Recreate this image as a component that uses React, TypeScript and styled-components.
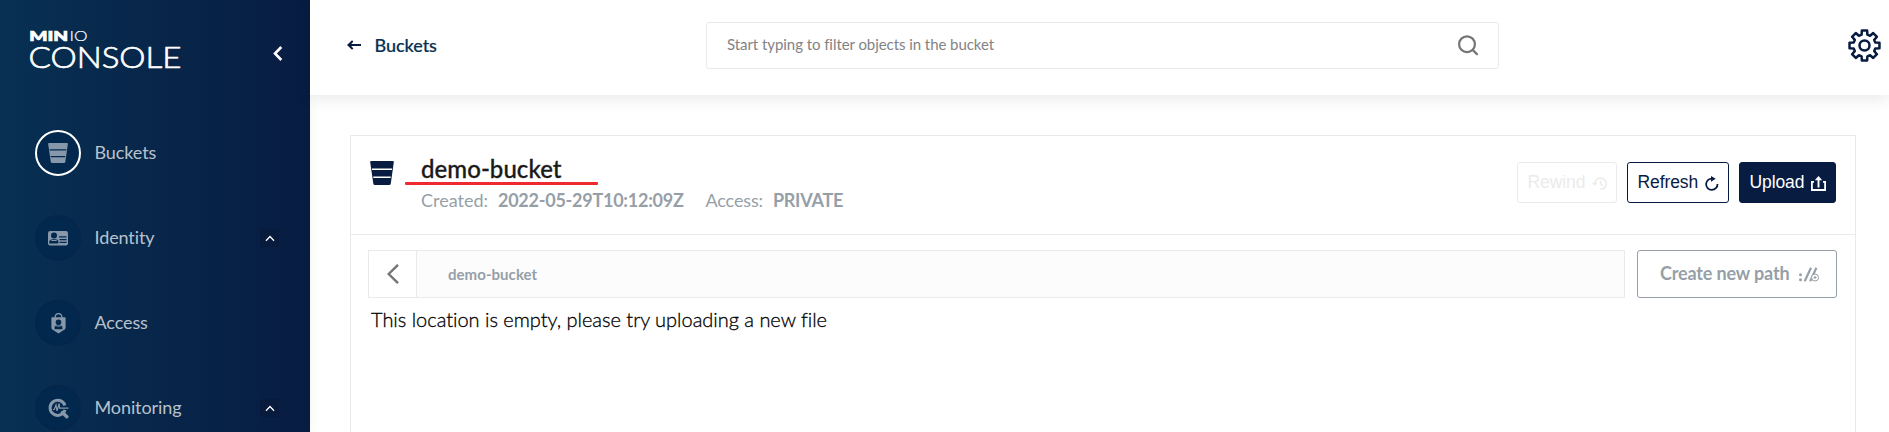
import React from "react";
import styled, { createGlobalStyle } from "styled-components";

const navy = "#081c42";
const line = "#e9ebeb";
const muted = "#969fa8";

const GlobalStyle = createGlobalStyle`
  * { box-sizing: border-box; }
  body {
    margin: 0;
    background: #fff;
    font-family: Lato, "Liberation Sans", sans-serif;
    font-variant-ligatures: none;
    overflow: hidden;
  }
  button { font: inherit; letter-spacing: inherit; margin: 0; padding: 0; background: none; border: 0; }
  svg { display: block; flex: none; }
`;

const Shell = styled.div`
  display: flex;
  height: 432px;
  overflow: hidden;
`;

const Sidebar = styled.nav`
  flex: none;
  width: 310px;
  background: linear-gradient(90deg, #073052 0%, #081c42 100%);
  box-shadow: 0 0 10px rgba(0, 0, 0, 0.06);
  z-index: 1;
`;

const Brand = styled.div`
  display: flex;
  justify-content: space-between;
  height: 130px;
  padding: 24px 27px 0 28px;
`;

const CollapseButton = styled.button`
  height: 15px;
  margin-top: 22px;
  color: #fff;
`;

const MenuItem = styled.div`
  display: flex;
  align-items: center;
  height: 46px;
  margin-bottom: 39px;
  padding: 0 31px 0 35px;
`;

const MenuIcon = styled.span<{ $active?: boolean }>`
  display: flex;
  align-items: center;
  justify-content: center;
  width: 46px;
  height: 46px;
  border: 2px solid ${(p) => (p.$active ? "#fff" : "#05264a")};
  border-radius: 50%;
  background: #02294d;
  color: #8798ab;
`;

const MenuLabel = styled.span`
  flex: 1;
  margin-left: 13.5px;
  padding-bottom: 2px;
  color: #b9c2cc;
  font-size: 18px;
  line-height: 22px;
  letter-spacing: -0.1px;
`;

const Toggle = styled.span`
  display: flex;
  align-items: center;
  justify-content: center;
  width: 19px;
  height: 18px;
  border-radius: 2px;
  background: #081b3c;
  color: #fff;
`;

const Main = styled.main`
  flex: 1;
  min-width: 0;
  display: flex;
  flex-direction: column;
`;

const Header = styled.header`
  display: flex;
  align-items: center;
  flex: none;
  height: 95px;
  padding: 0 8px 5px 37px;
  background: #fff;
  box-shadow: 0 3px 16px rgba(0, 0, 0, 0.1);
  z-index: 2;
`;

const BackLink = styled.div`
  display: flex;
  align-items: center;
  gap: 14px;
  width: 359px;
  color: #073052;
  font-size: 18px;
  font-weight: 500;
  line-height: 22px;
  -webkit-text-stroke: 0.2px;

  span { margin-left: -0.5px; letter-spacing: -0.05px; }
`;

const SearchBox = styled.div`
  display: flex;
  align-items: center;
  justify-content: space-between;
  width: 793px;
  height: 47px;
  padding: 0 20px;
  border: 1px solid ${line};
  border-radius: 3px;
  color: #838383;
  font-size: 15px;

  span { padding-bottom: 2px; letter-spacing: -0.06px; }
`;

const Settings = styled.button`
  margin-left: auto;
  color: ${navy};
`;

const Card = styled.section`
  flex: 1;
  margin: 40px 33px 0 40px;
  border: 1px solid ${line};
  border-bottom: 0;
`;

const CardHeader = styled.div`
  display: flex;
  align-items: flex-start;
  height: 99px;
  padding: 0 19px;
  border-bottom: 1px solid ${line};
`;

const BucketMark = styled.div`
  width: 51px;
  padding-top: 25px;
  color: ${navy};
`;

const Info = styled.div`
  flex: 1;
  padding-top: 18px;
`;

const Title = styled.h1`
  position: relative;
  margin: 0;
  color: #1a1a1a;
  font-size: 24px;
  font-weight: 500;
  line-height: 30px;
  letter-spacing: 0.05px;
  -webkit-text-stroke: 0.3px;

  &::after {
    content: "";
    position: absolute;
    left: -16px;
    top: 28px;
    width: 193px;
    height: 3px;
    border-radius: 1px;
    background: #ee2a30;
  }
`;

const Meta = styled.div`
  display: flex;
  margin-top: 5px;
  color: ${muted};
  font-size: 18px;
  line-height: 22px;

  strong { margin: 0 22px 0 10px; letter-spacing: -0.25px; }
  strong ~ span { letter-spacing: -0.15px; }
`;

const Actions = styled.div`
  display: flex;
  gap: 10px;
  padding-top: 26px;
`;

type Variant = "disabled" | "outline" | "solid";
const tones: Record<Variant, string> = {
  disabled: `color: #ebebeb; border-color: #ebebeb;`,
  outline: `color: ${navy}; border-color: ${navy};`,
  solid: `color: #fff; border-color: ${navy}; background: ${navy};`,
};

const ActionButton = styled.button<{ $variant: Variant; $width: number }>`
  display: flex;
  align-items: center;
  justify-content: space-between;
  width: ${(p) => p.$width}px;
  height: 41px;
  padding: 0 9px 1px 9.5px;
  border: 1px solid;
  border-radius: 3px;
  font-family: "Liberation Sans", Arial, sans-serif;
  font-size: 17.5px;
  letter-spacing: -0.1px;
  ${(p) => tones[p.$variant]}

  svg { margin-top: 2px; }
`;

const PathRow = styled.div`
  display: flex;
  gap: 12px;
  padding: 15px 18px 0 17px;
`;

const PathBar = styled.div`
  flex: 1;
  display: flex;
  align-items: center;
  height: 48px;
  border: 1px solid ${line};
  background: #fcfcfc;
  color: ${muted};
  font-size: 15px;
  font-weight: 700;
  letter-spacing: 0.05px;
`;

const PathBack = styled.button`
  display: flex;
  align-items: center;
  justify-content: center;
  width: 48px;
  height: 46px;
  margin-right: 31px;
  border-right: 1px solid ${line};
  background: #fff;
  color: #757575;
`;

const CreatePath = styled.button`
  display: flex;
  align-items: center;
  justify-content: space-between;
  width: 200px;
  height: 48px;
  padding: 0 17px 2px 22px;
  border: 1px solid ${muted};
  border-radius: 3px;
  color: ${muted};
  font-size: 18px;
  font-weight: 700;
  letter-spacing: -0.15px;

  svg { margin-top: 2px; }
`;

const Empty = styled.p`
  margin: 9px 0 0 20px;
  color: #000;
  font-size: 20px;
  font-weight: 300;
  line-height: 24px;
  letter-spacing: -0.02px;
  -webkit-text-stroke: 0.3px;
`;

const Logo = () => (
  <svg width="160" height="54" viewBox="28 24 160 54" fill="#fff">
    <text x="29.2" y="41" fontSize="13.5" fontWeight="900" stroke="#fff" strokeWidth=".7" textLength="39" lengthAdjust="spacingAndGlyphs">MIN</text>
    <text x="69.5" y="41" fontSize="13.5" fontWeight="300" stroke="#fff" strokeWidth=".2" textLength="18" lengthAdjust="spacingAndGlyphs">IO</text>
    <text x="28.5" y="67.7" fontSize="30" fontWeight="300" stroke="#fff" strokeWidth=".7" textLength="153" lengthAdjust="spacingAndGlyphs">CONSOLE</text>
  </svg>
);

const Chevron = ({ w, h, d, stroke }: { w: number; h: number; d: string; stroke: number }) => (
  <svg width={w} height={h} viewBox={`0 0 ${w} ${h}`} fill="none" stroke="currentColor" strokeWidth={stroke}>
    <path d={d} />
  </svg>
);

const BucketIcon = ({ size, gap }: { size: number; gap: string }) => (
  <svg width={size} height={size} viewBox="0 0 24 24">
    <path fill="currentColor" d="M1.2 0h21.6q1.2 0 1 1.3L20.8 22.5q-.2 1.5-1.6 1.5H4.9q-1.4 0-1.6-1.5L.2 1.3Q0 0 1.2 0z" />
    <path stroke={gap} strokeWidth="1.5" d="M2 8.3h20M3.3 16.2h17.4" />
  </svg>
);

const IdentityIcon = () => (
  <svg width="20" height="15" viewBox="0 0 20 15">
    <rect width="20" height="14.5" rx="2.2" fill="currentColor" />
    <g fill="#02294d">
      <circle cx="6" cy="4.6" r="3" />
      <path d="M1.3 12.6V10q1.2-1.8 3.3-1.8h3Q9.8 8.3 10.3 10v2.6z" />
      <path d="M11 5.2h7.6v1.2H11zM11.5 8h7.1v1.2h-7.1zM11.5 10.8h7.1V12h-7.1z" />
    </g>
    <path d="M3 9h6l-.6 1H3.6z" fill="currentColor" />
  </svg>
);

const AccessIcon = () => (
  <svg width="15" height="21" viewBox="0 0 15 21">
    <path d="M4.2 5V3.6a3.3 3 0 0 1 6.6 0V5" fill="none" stroke="currentColor" strokeWidth="1.3" />
    <path d="M1 4.3h13q.6 0 .6.6v9.6q0 1.2-1 2L7.5 20.5 1.4 16.5q-1-.8-1-2V4.900q0-.6.6-.6z" fill="currentColor" />
    <g fill="#02294d">
      <circle cx="7.5" cy="9.2" r="2.8" />
      <path d="M3.6 16.2v-2.4q1-1.6 2.6-1.6h2.6q1.6 0 2.6 1.6v2.4z" />
    </g>
    <path d="M5 12.6h5l-.8.9H5.800z" fill="currentColor" />
  </svg>
);

const MonitoringIcon = () => (
  <svg width="21" height="21" viewBox="0 0 21 21" fill="none" stroke="currentColor">
    <path d="M16.9 7.4a7.6 7.6 0 1 0 .1 4.5" strokeWidth="3" />
    <path d="M14.5 14.5l4.3 4.3" strokeWidth="3.4" strokeLinecap="round" />
    <path d="M5 11.5h1.3L8 7l1 5.8L11.2 5.5l.4 4.7H20.5" strokeWidth="1.2" />
  </svg>
);

const ArrowLeft = () => (
  <svg width="14" height="10" viewBox="0 0 14 10">
    <path fill={navy} d="M0 5L5 .2 6.400 1.600 4.200 4H14v2H4.200l2.200 2.400L5 9.800z" />
  </svg>
);

const SearchIcon = () => (
  <svg width="20" height="21" viewBox="0 0 20 21" fill="none" stroke="#757575" strokeWidth="2.2" strokeLinecap="round">
    <circle cx="9" cy="9.2" r="7.900" />
    <path d="M14.9 15.1l4 4" />
  </svg>
);

const teeth = Array.from({ length: 8 }, (_, i) => {
  const at = (r: number, deg: number) => {
    const a = ((i * 45 + deg - 90) * Math.PI) / 180;
    return `${(16.5 + r * Math.cos(a)).toFixed(2)} ${(16.5 + r * Math.sin(a)).toFixed(2)}`;
  };
  return `${i ? "L" : "M"}${at(11.2, -15)}L${at(15.2, -10)}L${at(15.2, 10)}L${at(11.2, 15)}`;
}).join("");

const GearIcon = () => (
  <svg width="33" height="33" viewBox="0 0 33 33" fill="none" stroke="currentColor" strokeWidth="2.5" strokeLinejoin="round">
    <path d={`${teeth}Z`} />
    <circle cx="16.5" cy="16.5" r="5" />
  </svg>
);

const RewindIcon = () => (
  <svg width="15" height="13" viewBox="0 0 15 13" fill="none" stroke="currentColor" strokeWidth="1.5">
    <path d="M2.700 7a5.800 5.600 0 1 1 5.800 5.300M8.500 3.500v3.300l2.300 2" />
    <path d="M0 5.800h5.400L2.700 8.900z" fill="currentColor" stroke="none" />
  </svg>
);

const RefreshIcon = () => (
  <svg width="14" height="15" viewBox="0 0 14 15" fill="none" stroke="currentColor" strokeWidth="1.8">
    <path d="M7.5 2.6A5.7 5.7 0 1 0 12.5 8" />
    <path d="M6 0l4.7 2.8L6 5.8z" fill="currentColor" stroke="none" />
  </svg>
);

const UploadIcon = () => (
  <svg width="15" height="15" viewBox="0 0 15 15" fill="none" stroke="currentColor">
    <path d="M3 5.8H.9V14h13.200V5.800H12" strokeWidth="1.8" />
    <path d="M7.5 11.5V3" strokeWidth="1.9" />
    <path d="M7.5 0l3.7 4.300H3.800z" fill="currentColor" stroke="none" />
  </svg>
);

const NewPathIcon = () => (
  <svg width="20" height="15" viewBox="0 0 20 15" fill="none" stroke="currentColor">
    <path d="M5.7 14.3L12 .8M11.2 14.3L17.4 .8" strokeWidth="2.2" />
    <g fill="currentColor" stroke="none">
      <circle cx="1.5" cy="7.8" r="1.5" />
      <circle cx="1.5" cy="12.7" r="1.5" />
    </g>
    <circle cx="16" cy="10.5" r="3.5" fill="#fff" strokeWidth="1" />
    <path d="M16 9v3M14.5 10.5h3" strokeWidth="1.1" />
  </svg>
);

const menu = [
  { label: "Buckets", icon: <BucketIcon size={20} gap="#02294d" />, active: true },
  { label: "Identity", icon: <IdentityIcon />, group: true },
  { label: "Access", icon: <AccessIcon /> },
  { label: "Monitoring", icon: <MonitoringIcon />, group: true },
];

export default function App() {
  return (
    <Shell>
      <GlobalStyle />
      <Sidebar>
        <Brand>
          <Logo />
          <CollapseButton aria-label="Collapse menu">
            <Chevron w={10} h={15} d="M8.3 1L2 7.5 8.3 14" stroke={2.6} />
          </CollapseButton>
        </Brand>
        {menu.map((item) => (
          <MenuItem key={item.label}>
            <MenuIcon $active={item.active}>{item.icon}</MenuIcon>
            <MenuLabel>{item.label}</MenuLabel>
            {item.group && (
              <Toggle>
                <Chevron w={10} h={7} d="M1 5.7L5 1.5 9 5.7" stroke={1.3} />
              </Toggle>
            )}
          </MenuItem>
        ))}
      </Sidebar>
      <Main>
        <Header>
          <BackLink>
            <ArrowLeft />
            <span>Buckets</span>
          </BackLink>
          <SearchBox>
            <span>Start typing to filter objects in the bucket</span>
            <SearchIcon />
          </SearchBox>
          <Settings aria-label="Settings">
            <GearIcon />
          </Settings>
        </Header>
        <Card>
          <CardHeader>
            <BucketMark>
              <BucketIcon size={24} gap="#fff" />
            </BucketMark>
            <Info>
              <Title>demo-bucket</Title>
              <Meta>
                <span>Created:</span>
                <strong>2022-05-29T10:12:09Z</strong>
                <span>Access:</span>
                <strong>PRIVATE</strong>
              </Meta>
            </Info>
            <Actions>
              <ActionButton $variant="disabled" $width={100}>Rewind <RewindIcon /></ActionButton>
              <ActionButton $variant="outline" $width={102}>Refresh <RefreshIcon /></ActionButton>
              <ActionButton $variant="solid" $width={97}>Upload <UploadIcon /></ActionButton>
            </Actions>
          </CardHeader>
          <PathRow>
            <PathBar>
              <PathBack aria-label="Back">
                <Chevron w={12} h={20} d="M11 .8L1.7 10 11 19.2" stroke={2.4} />
              </PathBack>
              <span>demo-bucket</span>
            </PathBar>
            <CreatePath>Create new path <NewPathIcon /></CreatePath>
          </PathRow>
          <Empty>This location is empty, please try uploading a new file</Empty>
        </Card>
      </Main>
    </Shell>
  );
}
